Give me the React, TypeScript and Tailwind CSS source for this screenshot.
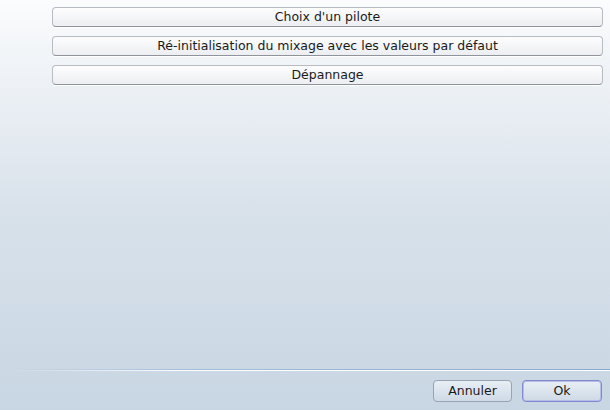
const actions = [
    "Choix d'un pilote",
    "Ré-initialisation du mixage avec les valeurs par défaut",
    "Dépannage",
];

export default function App() {
    return (
        <div
            className="flex h-[410px] w-[610px] flex-col bg-gradient-to-b from-[#fbfcfd] via-[#d9e2eb] via-50% to-[#c8d6e3] text-[12.5px] text-[#1a1a1a]"
            style={{ fontFamily: '"DejaVu Sans", sans-serif' }}
        >
            <div className="flex flex-col gap-[9px] pl-[52px] pr-[7px] pt-[7px]">
                {actions.map((label) => (
                    <button
                        key={label}
                        type="button"
                        className="h-[20px] rounded-[4px] border border-[#b7bcc2] border-b-[#8e949a] bg-gradient-to-b from-[#fdfdfe] to-[#eceef1] pt-px leading-none shadow-[0_1px_0_#ffffff]"
                    >
                        {label}
                    </button>
                ))}
            </div>

            <div className="flex-1" />

            <div className="ml-[10px]">
                <div className="h-px bg-gradient-to-r from-transparent via-[#a3bcd8] via-30% to-[#88a9cf]" />
                <div className="h-px bg-gradient-to-r from-transparent via-white via-30% to-white" />
            </div>

            <div className="flex justify-end gap-[10px] pb-[8px] pr-[8px] pt-[9px]">
                <button
                    type="button"
                    className="h-[22px] w-[79px] rounded-[4px] border border-[#98a4b2] bg-gradient-to-b from-[#e8eef5] to-[#cfdae6] pt-px leading-none"
                >
                    Annuler
                </button>
                <button
                    type="button"
                    className="h-[22px] w-[80px] rounded-[4px] border border-[#8088d0] bg-gradient-to-b from-[#e8eef5] to-[#cfdae6] pt-px leading-none shadow-[inset_0_0_0_1px_#b8bde8]"
                >
                    Ok
                </button>
            </div>
        </div>
    );
}
